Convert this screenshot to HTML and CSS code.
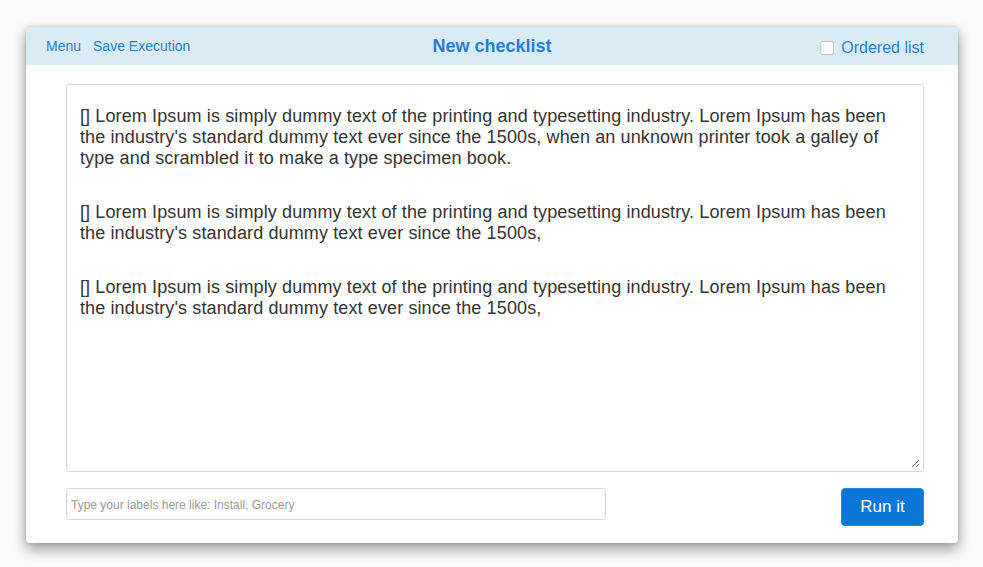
FILE: index.html
```html
<!DOCTYPE html>
<html>
<head>
<meta charset="utf-8">
<link rel="stylesheet" href="styles.css">
</head>
<body>
<div class="panel">
  <header class="bar">
    <nav class="nav">
      <a class="link">Menu</a>
      <a class="link">Save Execution</a>
    </nav>
    <h1 class="title">New checklist</h1>
    <label class="ordered"><span class="box"></span>Ordered list</label>
  </header>
  <main class="body">
    <div class="editor">
      <p class="item">[] Lorem Ipsum is simply dummy text of the printing and typesetting industry. Lorem Ipsum has been the industry's standard dummy text ever since the 1500s, when an unknown printer took a galley of type and scrambled it to make a type specimen book.</p>
      <p class="item">[] Lorem Ipsum is simply dummy text of the printing and typesetting industry. Lorem Ipsum has been the industry's standard dummy text ever since the 1500s,</p>
      <p class="item">[] Lorem Ipsum is simply dummy text of the printing and typesetting industry. Lorem Ipsum has been the industry's standard dummy text ever since the 1500s,</p>
      <svg class="grip" width="10" height="10" viewBox="0 0 10 10"><path d="M9 2 L2 9 M9 6 L6 9" stroke="#777" stroke-width="1" fill="none"/></svg>
    </div>
    <div class="footer">
      <div class="labels">Type your labels here like: Install, Grocery</div>
      <button class="run">Run it</button>
    </div>
  </main>
</div>
</body>
</html>
```

FILE: styles.css
```css
html, body {
  margin: 0;
  padding: 0;
  background: #fafafa;
  font-family: "Liberation Sans", Arial, sans-serif;
}
body {
  padding: 27px 25px 0 26px;
  min-height: 567px;
  box-sizing: border-box;
}
.panel {
  width: 932px;
  height: 516px;
  background: #fff;
  border-radius: 4px;
  box-shadow: 0 6px 14px rgba(0,0,0,0.4), 0 0 4px rgba(0,0,0,0.15);
  overflow: hidden;
  display: flex;
  flex-direction: column;
}
.bar {
  height: 38px;
  background: #d9ecf5;
  display: flex;
  align-items: center;
  position: relative;
  padding: 0 34px 0 20px;
}
.nav {
  display: flex;
  gap: 12px;
  font-size: 14px;
}
.link {
  color: #1f80d6;
}
.title {
  position: absolute;
  left: 0;
  right: 0;
  margin: 0;
  text-align: center;
  font-size: 18px;
  font-weight: bold;
  color: #1f80d6;
  pointer-events: none;
  top: 9px;
}
.ordered {
  margin-left: auto;
  display: flex;
  align-items: center;
  gap: 7px;
  font-size: 16px;
  color: #1f80d6;
  padding-top: 3px;
}
.box {
  width: 12px;
  height: 12px;
  border: 1px solid #c8c8c8;
  border-radius: 2px;
  background: #fff;
}
.body {
  padding: 19px 34px 0 40px;
}
.editor {
  position: relative;
  border: 1px solid #d6d6d6;
  border-radius: 3px;
  padding: 21px 13px 0 13px;
  box-sizing: border-box;
  height: 388px;
  color: #333;
  font-size: 18px;
  letter-spacing: 0.12px;
  line-height: 21px;
}
.item {
  margin: 0 0 33px 0;
}
.grip {
  position: absolute;
  right: 3px;
  bottom: 3px;
}
.footer {
  display: flex;
  justify-content: space-between;
  align-items: flex-start;
  margin-top: 16px;
}
.labels {
  width: 540px;
  height: 32px;
  box-sizing: border-box;
  border: 1px solid #d6d6d6;
  border-radius: 3px;
  font-size: 12px;
  color: #999;
  padding: 9px 4px 0 4px;
}
.run {
  width: 83px;
  height: 38px;
  background: #0a77d8;
  border: 1px solid #2a86d8;
  border-radius: 4px;
  color: #fff;
  font-family: "Liberation Sans", Arial, sans-serif;
  font-size: 17px;
  padding: 0;
}
```
